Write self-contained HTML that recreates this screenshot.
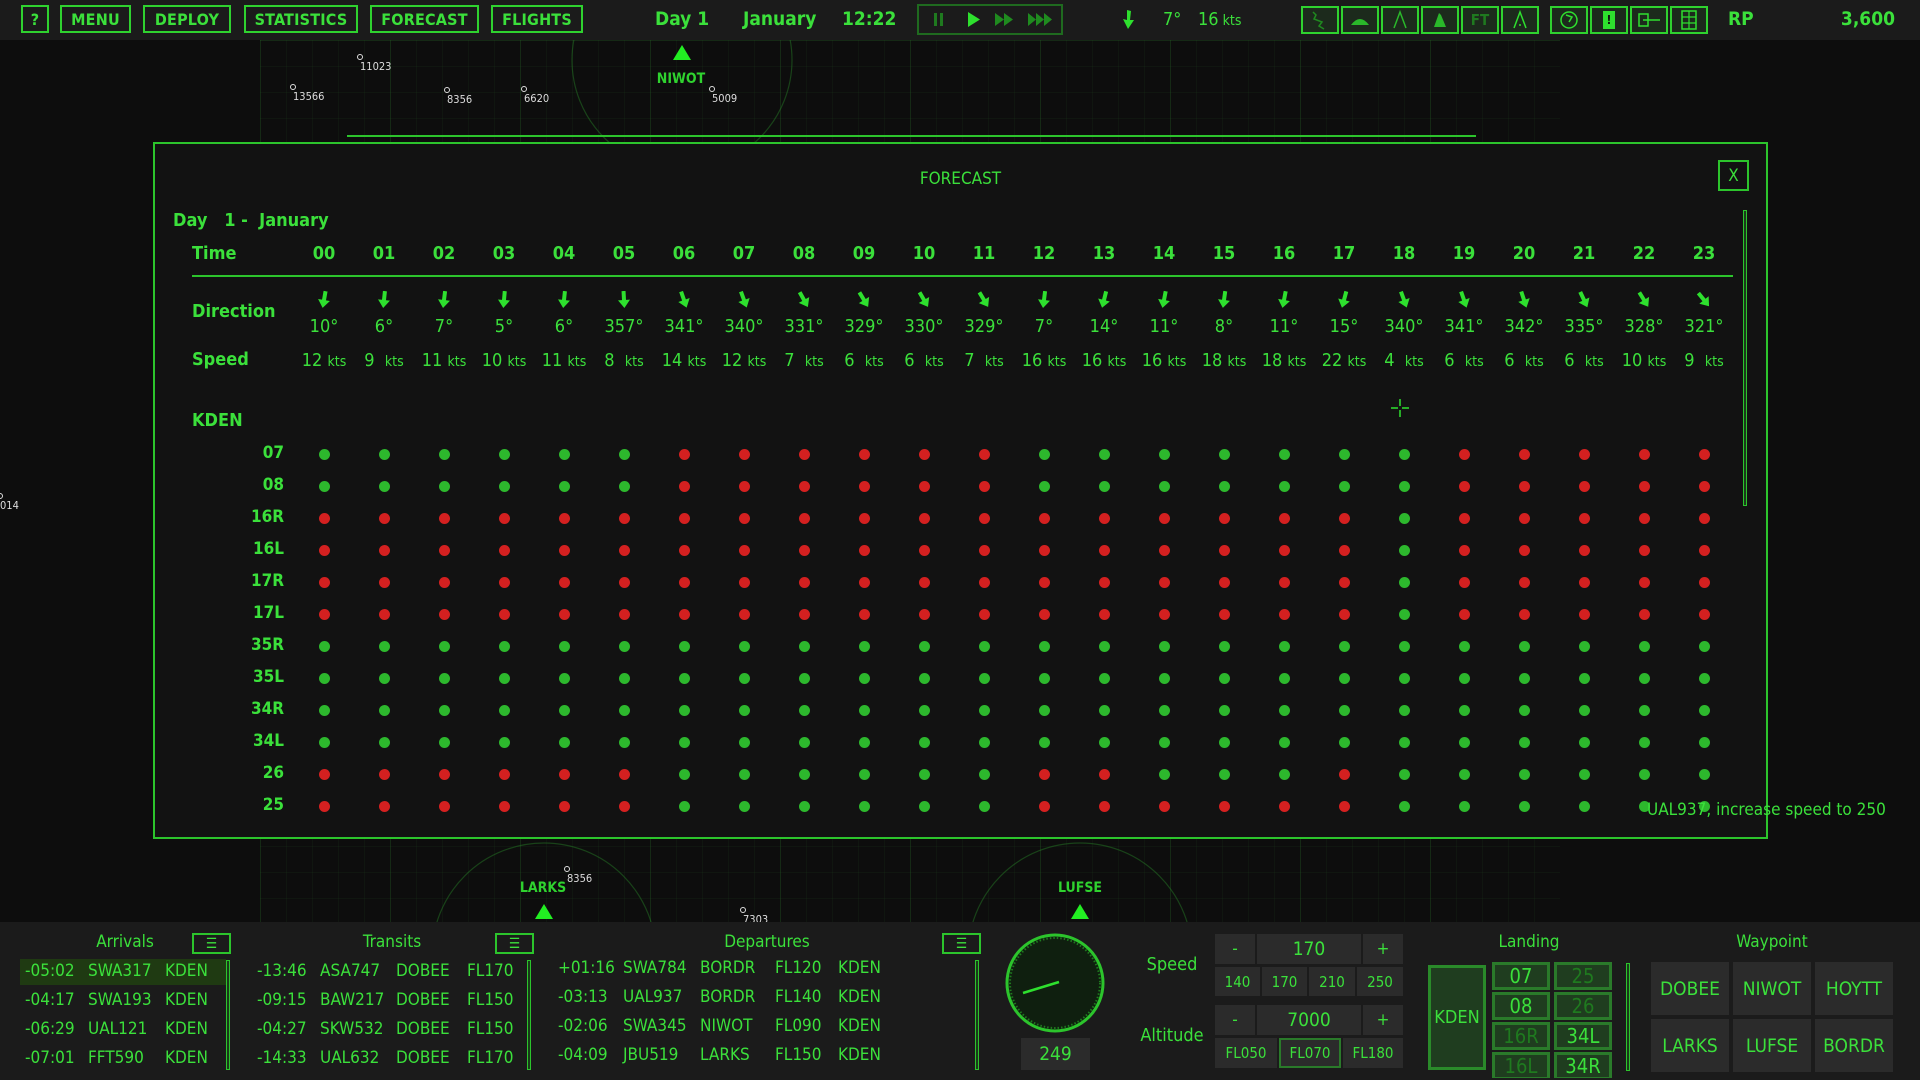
<!DOCTYPE html>
<html><head><meta charset="utf-8">
<style>
*{margin:0;padding:0;box-sizing:border-box}
body{width:1920px;height:1080px;overflow:hidden;background:#0d0d0d;font-family:"Liberation Sans Narrow","DejaVu Sans Condensed","Liberation Sans",sans-serif;color:#3be03b;position:relative}
.a{position:absolute}
.top{left:0;top:0;width:1920px;height:40px;background:#1b1b1b}
.btn{position:absolute;top:5px;height:28px;border:2px solid #2fd22f;color:#3be03b;font-weight:bold;font-size:16px;display:flex;align-items:center;justify-content:center;letter-spacing:.2px}
.tt{position:absolute;top:8px;font-size:19px;font-weight:bold}
.ib{position:absolute;top:6px;width:38px;height:28px;border:2px solid #2fd22f;background:#1c2a1c;display:flex;align-items:center;justify-content:center}
.grid{background-image:linear-gradient(rgba(40,110,40,.22) 1px,transparent 1px),linear-gradient(90deg,rgba(40,110,40,.22) 1px,transparent 1px),linear-gradient(rgba(40,110,40,.09) 1px,transparent 1px),linear-gradient(90deg,rgba(40,110,40,.09) 1px,transparent 1px);background-size:130px 130px,130px 130px,26px 26px,26px 26px}
.num{position:absolute;font-size:11px;color:#ddd;font-family:"DejaVu Sans Condensed",sans-serif}
.num:before{content:"";position:absolute;left:-3px;top:-6px;width:4px;height:4px;border:1px solid #ddd;border-radius:50%}
.wpl{position:absolute;font-size:14px;font-weight:bold;color:#2fd22f;transform:translateX(-50%)}
.tri{position:absolute;width:0;height:0;border-left:9px solid transparent;border-right:9px solid transparent;border-bottom:15px solid #22ee22;transform:translateX(-50%)}
.panel{left:153px;top:142px;width:1615px;height:697px;border:2px solid #2cc42c;background:#121212}
.row{position:absolute;left:294px;display:flex}
.row>div{width:60px;text-align:center}
.lab{position:absolute;left:37px;font-size:18px;font-weight:bold}
.rl{position:absolute;width:100px;left:29px;text-align:right;font-size:17px;font-weight:bold}
.dot{position:absolute;width:11px;height:11px;border-radius:50%}
.bot{left:0;top:922px;width:1920px;height:158px;background:#1b1b1b}
.bt{position:absolute;font-size:17px;transform:translateX(-50%)}
.mb{position:absolute;width:39px;height:21px;border:2px solid #2cc42c;display:flex;align-items:center;justify-content:center;font-size:14px;font-weight:bold}
.lr{position:absolute;font-size:17px;white-space:nowrap}
.sb{position:absolute;width:4px;border:1px solid #2cc42c;background:#1a3a1a}
.cb{position:absolute;background:#2b2b2b;display:flex;align-items:center;justify-content:center;font-size:17px}
.rw{position:absolute;width:58px;height:28px;background:#1f3d1f;border:3px solid #2a7a2a;display:flex;align-items:center;justify-content:center;font-size:20px}
.wb{position:absolute;width:78px;height:53px;background:#2b2b2b;display:flex;align-items:center;justify-content:center;font-size:19px}
</style></head><body>

<div class="a grid" style="left:260px;top:40px;width:1300px;height:882px"></div>
<svg class="a" style="left:0;top:0" width="1920" height="1080">
<g fill="none" stroke="rgba(40,130,40,.45)" stroke-width="1.2">
<circle cx="682" cy="60" r="110"/>
<circle cx="544" cy="955" r="112"/>
<circle cx="1080" cy="955" r="112"/>
</g>
<line x1="347" y1="136" x2="1476" y2="136" stroke="#2cc42c" stroke-width="2"/>
</svg>
<div class="num" style="left:360px;top:60px">11023</div>
<div class="num" style="left:293px;top:90px">13566</div>
<div class="num" style="left:447px;top:93px">8356</div>
<div class="num" style="left:524px;top:92px">6620</div>
<div class="num" style="left:712px;top:92px">5009</div>
<div class="tri" style="left:682px;top:45px"></div>
<div class="wpl" style="left:681px;top:71px">NIWOT</div>
<div class="num" style="left:0;top:499px">014</div>
<div class="num" style="left:567px;top:872px">8356</div>
<div class="num" style="left:743px;top:913px">7303</div>
<div class="wpl" style="left:543px;top:880px">LARKS</div>
<div class="tri" style="left:544px;top:904px"></div>
<div class="wpl" style="left:1080px;top:880px">LUFSE</div>
<div class="tri" style="left:1080px;top:904px"></div>

<div class="a top"></div>
<div class="btn" style="left:21px;width:28px">?</div>
<div class="btn" style="left:60px;width:71px">MENU</div>
<div class="btn" style="left:143px;width:88px">DEPLOY</div>
<div class="btn" style="left:244px;width:114px">STATISTICS</div>
<div class="btn" style="left:370px;width:109px">FORECAST</div>
<div class="btn" style="left:491px;width:92px">FLIGHTS</div>
<div class="tt" style="left:655px">Day 1</div>
<div class="tt" style="left:743px">January</div>
<div class="tt" style="left:842px">12:22</div>
<div class="a" style="left:917px;top:4px;width:146px;height:31px;border:2px solid #1f6a1f"></div>
<svg class="a" style="left:917px;top:4px" width="146" height="31">
<rect x="17" y="9" width="3" height="13" fill="#1f7a1f"/><rect x="23" y="9" width="3" height="13" fill="#1f7a1f"/>
<path d="M51 8 L63 15.5 L51 23Z" fill="#2ee02e"/>
<path d="M78 9 L87 15.5 L78 22Z M87 9 L96 15.5 L87 22Z" fill="#1f8a1f"/>
<path d="M111 9 L119 15.5 L111 22Z M119 9 L127 15.5 L119 22Z M127 9 L135 15.5 L127 22Z" fill="#1f8a1f"/>
</svg>
<svg class="a" style="left:1122px;top:10px" width="14" height="20"><path d="M5 0 L9 1 L8 10 L12 10 L6 19 L1 9 L5 10Z" fill="#2ee02e"/></svg>
<div class="a" style="left:1163px;top:9px;font-size:18px">7°</div>
<div class="a" style="left:1198px;top:9px;font-size:18px">16<span style="font-size:14px"> kts</span></div>
<div class="ib" style="left:1301px"><svg width="24" height="22"><path d="M5 3 L8 6 L6 10 L14 13 L11 17 L16 20" fill="none" stroke="#1f8a1f" stroke-width="1.5"/></svg></div>
<div class="ib" style="left:1341px"><svg width="24" height="22"><path d="M3 16 Q12 4 21 16Z" fill="#2ab82a"/></svg></div>
<div class="ib" style="left:1381px"><svg width="24" height="22"><path d="M6 19 L12 3 L18 19" fill="none" stroke="#2ab82a" stroke-width="1.5"/></svg></div>
<div class="ib" style="left:1421px"><svg width="24" height="22"><path d="M6 18 L11 4 L13 6 L18 18Z" fill="#2ab82a"/></svg></div>
<div class="ib" style="left:1461px;color:#1f7a1f;font-size:15px;font-weight:bold">FT</div>
<div class="ib" style="left:1501px"><svg width="24" height="22"><path d="M6 19 L12 3 L18 19" fill="none" stroke="#2ee02e" stroke-width="1.5"/><circle cx="12" cy="16" r="1" fill="#2ee02e"/></svg></div>
<div class="ib" style="left:1550px"><svg width="24" height="22"><circle cx="12" cy="11" r="8" fill="none" stroke="#2ee02e" stroke-width="1.5"/><path d="M9 6 L15 8 L12 13" fill="none" stroke="#2ee02e" stroke-width="1.5"/></svg></div>
<div class="ib" style="left:1590px"><div style="width:12px;height:18px;background:#2ee02e;color:#111;font-size:12px;font-weight:bold;text-align:center;line-height:18px">!</div></div>
<div class="ib" style="left:1630px"><svg width="28" height="22"><rect x="4" y="5" width="9" height="12" fill="none" stroke="#2ee02e" stroke-width="1.5"/><line x1="8" y1="11" x2="25" y2="11" stroke="#2ee02e" stroke-width="1.5"/></svg></div>
<div class="ib" style="left:1670px"><svg width="24" height="22"><rect x="5" y="2" width="14" height="18" fill="none" stroke="#2ee02e" stroke-width="1.5"/><path d="M5 8H19M5 14H19M12 2V20" stroke="#2ee02e" stroke-width="1.2"/></svg></div>
<div class="tt" style="left:1728px">RP</div>
<div class="tt" style="right:25px">3,600</div>

<div class="a panel">
<div class="a" style="left:0;width:100%;top:25px;text-align:center;font-size:17px">FORECAST</div>
<div class="a" style="left:1563px;top:16px;width:31px;height:31px;border:2px solid #2cc42c;display:flex;align-items:center;justify-content:center;font-size:17px">X</div>
<div class="a" style="left:18px;top:66px;font-size:18px;font-weight:bold">Day&nbsp;&nbsp; 1 -&nbsp; January</div>
<div class="a" style="left:1588px;top:66px;width:4px;height:296px;border:1px solid #2cc42c;background:#1a3a1a"></div>
<div class="lab" style="top:99px">Time</div>
<div class="row" style="left:139px;top:99px;font-size:18px;font-weight:bold">
<div>00</div><div>01</div><div>02</div><div>03</div><div>04</div><div>05</div><div>06</div><div>07</div><div>08</div><div>09</div><div>10</div><div>11</div><div>12</div><div>13</div><div>14</div><div>15</div><div>16</div><div>17</div><div>18</div><div>19</div><div>20</div><div>21</div><div>22</div><div>23</div></div>
<div class="a" style="left:37px;top:131px;width:1541px;height:2px;background:#2cc42c"></div>
<div class="lab" style="top:157px">Direction</div>
<div class="row" id="arr" style="left:139px;top:147px;height:20px"></div>
<div class="row" style="left:139px;top:172px;font-size:18px">
<div>10°</div><div>6°</div><div>7°</div><div>5°</div><div>6°</div><div>357°</div><div>341°</div><div>340°</div><div>331°</div><div>329°</div><div>330°</div><div>329°</div><div>7°</div><div>14°</div><div>11°</div><div>8°</div><div>11°</div><div>15°</div><div>340°</div><div>341°</div><div>342°</div><div>335°</div><div>328°</div><div>321°</div></div>
<div class="lab" style="top:205px">Speed</div>
<div class="row" style="left:139px;top:206px;font-size:18px;white-space:nowrap">
<div>12 <small style="font-size:14px">kts</small></div><div>9 &nbsp;<small style="font-size:14px">kts</small></div><div>11 <small style="font-size:14px">kts</small></div><div>10 <small style="font-size:14px">kts</small></div><div>11 <small style="font-size:14px">kts</small></div><div>8 &nbsp;<small style="font-size:14px">kts</small></div><div>14 <small style="font-size:14px">kts</small></div><div>12 <small style="font-size:14px">kts</small></div><div>7 &nbsp;<small style="font-size:14px">kts</small></div><div>6 &nbsp;<small style="font-size:14px">kts</small></div><div>6 &nbsp;<small style="font-size:14px">kts</small></div><div>7 &nbsp;<small style="font-size:14px">kts</small></div><div>16 <small style="font-size:14px">kts</small></div><div>16 <small style="font-size:14px">kts</small></div><div>16 <small style="font-size:14px">kts</small></div><div>18 <small style="font-size:14px">kts</small></div><div>18 <small style="font-size:14px">kts</small></div><div>22 <small style="font-size:14px">kts</small></div><div>4 &nbsp;<small style="font-size:14px">kts</small></div><div>6 &nbsp;<small style="font-size:14px">kts</small></div><div>6 &nbsp;<small style="font-size:14px">kts</small></div><div>6 &nbsp;<small style="font-size:14px">kts</small></div><div>10 <small style="font-size:14px">kts</small></div><div>9 &nbsp;<small style="font-size:14px">kts</small></div></div>
<div class="lab" style="top:266px">KDEN</div>
<div class="rl" style="top:299px">07</div>
<div class="rl" style="top:331px">08</div>
<div class="rl" style="top:363px">16R</div>
<div class="rl" style="top:395px">16L</div>
<div class="rl" style="top:427px">17R</div>
<div class="rl" style="top:459px">17L</div>
<div class="rl" style="top:491px">35R</div>
<div class="rl" style="top:523px">35L</div>
<div class="rl" style="top:555px">34R</div>
<div class="rl" style="top:587px">34L</div>
<div class="rl" style="top:619px">26</div>
<div class="rl" style="top:651px">25</div>
<div id="dots"></div>
<svg class="a" style="left:1234px;top:253px" width="22" height="22"><path d="M11 2V9M11 13V20M2 11H9M13 11H20" stroke="#2ee02e" stroke-width="1.5"/></svg>
</div>
<div class="a" style="left:1647px;top:800px;font-size:17px;color:#3be03b">UAL937, increase speed to 250</div>

<div class="a bot"></div>
<div class="bt" style="left:125px;top:932px">Arrivals</div>
<div class="mb" style="left:192px;top:933px">☰</div>
<div class="a" style="left:20px;top:959px;width:206px;height:26px;background:#1f3a12"></div>
<div class="sb" style="left:226px;top:960px;height:110px"></div>
<div class="lr" style="left:25px;top:961px">-05:02</div><div class="lr" style="left:88px;top:961px">SWA317</div><div class="lr" style="left:165px;top:961px">KDEN</div>
<div class="lr" style="left:25px;top:990px">-04:17</div><div class="lr" style="left:88px;top:990px">SWA193</div><div class="lr" style="left:165px;top:990px">KDEN</div>
<div class="lr" style="left:25px;top:1019px">-06:29</div><div class="lr" style="left:88px;top:1019px">UAL121</div><div class="lr" style="left:165px;top:1019px">KDEN</div>
<div class="lr" style="left:25px;top:1048px">-07:01</div><div class="lr" style="left:88px;top:1048px">FFT590</div><div class="lr" style="left:165px;top:1048px">KDEN</div>

<div class="bt" style="left:392px;top:932px">Transits</div>
<div class="mb" style="left:495px;top:933px">☰</div>
<div class="sb" style="left:527px;top:960px;height:110px"></div>
<div class="lr" style="left:257px;top:961px">-13:46</div><div class="lr" style="left:320px;top:961px">ASA747</div><div class="lr" style="left:396px;top:961px">DOBEE</div><div class="lr" style="left:467px;top:961px">FL170</div>
<div class="lr" style="left:257px;top:990px">-09:15</div><div class="lr" style="left:320px;top:990px">BAW217</div><div class="lr" style="left:396px;top:990px">DOBEE</div><div class="lr" style="left:467px;top:990px">FL150</div>
<div class="lr" style="left:257px;top:1019px">-04:27</div><div class="lr" style="left:320px;top:1019px">SKW532</div><div class="lr" style="left:396px;top:1019px">DOBEE</div><div class="lr" style="left:467px;top:1019px">FL150</div>
<div class="lr" style="left:257px;top:1048px">-14:33</div><div class="lr" style="left:320px;top:1048px">UAL632</div><div class="lr" style="left:396px;top:1048px">DOBEE</div><div class="lr" style="left:467px;top:1048px">FL170</div>

<div class="bt" style="left:767px;top:932px">Departures</div>
<div class="mb" style="left:942px;top:933px">☰</div>
<div class="sb" style="left:975px;top:960px;height:110px"></div>
<div class="lr" style="left:558px;top:958px">+01:16</div><div class="lr" style="left:623px;top:958px">SWA784</div><div class="lr" style="left:700px;top:958px">BORDR</div><div class="lr" style="left:775px;top:958px">FL120</div><div class="lr" style="left:838px;top:958px">KDEN</div>
<div class="lr" style="left:558px;top:987px">-03:13</div><div class="lr" style="left:623px;top:987px">UAL937</div><div class="lr" style="left:700px;top:987px">BORDR</div><div class="lr" style="left:775px;top:987px">FL140</div><div class="lr" style="left:838px;top:987px">KDEN</div>
<div class="lr" style="left:558px;top:1016px">-02:06</div><div class="lr" style="left:623px;top:1016px">SWA345</div><div class="lr" style="left:700px;top:1016px">NIWOT</div><div class="lr" style="left:775px;top:1016px">FL090</div><div class="lr" style="left:838px;top:1016px">KDEN</div>
<div class="lr" style="left:558px;top:1045px">-04:09</div><div class="lr" style="left:623px;top:1045px">JBU519</div><div class="lr" style="left:700px;top:1045px">LARKS</div><div class="lr" style="left:775px;top:1045px">FL150</div><div class="lr" style="left:838px;top:1045px">KDEN</div>

<svg class="a" style="left:1003px;top:931px" width="104" height="104">
<circle cx="52" cy="52" r="48" fill="#0f1f0f" stroke="#2cc42c" stroke-width="3"/>
<circle cx="52" cy="52" r="45" fill="none" stroke="#1f7a1f" stroke-width="2" stroke-dasharray="1.5 2"/>
<line x1="20" y1="62" x2="56" y2="51" stroke="#2ee02e" stroke-width="2.5"/>
</svg>
<div class="cb" style="left:1021px;top:1038px;width:69px;height:32px;font-size:19px">249</div>

<div class="bt" style="left:1172px;top:954px;font-size:18px">Speed</div>
<div class="cb" style="left:1215px;top:934px;width:40px;height:30px">-</div>
<div class="cb" style="left:1257px;top:934px;width:104px;height:30px;font-size:19px">170</div>
<div class="cb" style="left:1363px;top:934px;width:40px;height:30px">+</div>
<div class="cb" style="left:1215px;top:967px;width:45px;height:29px;font-size:15px">140</div>
<div class="cb" style="left:1262px;top:967px;width:45px;height:29px;font-size:15px">170</div>
<div class="cb" style="left:1309px;top:967px;width:46px;height:29px;font-size:15px">210</div>
<div class="cb" style="left:1357px;top:967px;width:46px;height:29px;font-size:15px">250</div>
<div class="bt" style="left:1172px;top:1025px;font-size:18px">Altitude</div>
<div class="cb" style="left:1215px;top:1005px;width:40px;height:30px">-</div>
<div class="cb" style="left:1257px;top:1005px;width:104px;height:30px;font-size:19px">7000</div>
<div class="cb" style="left:1363px;top:1005px;width:40px;height:30px">+</div>
<div class="cb" style="left:1215px;top:1038px;width:62px;height:30px;font-size:15px">FL050</div>
<div class="cb" style="left:1279px;top:1038px;width:62px;height:30px;font-size:15px;border:2px solid #2a7a2a">FL070</div>
<div class="cb" style="left:1343px;top:1038px;width:60px;height:30px;font-size:15px">FL180</div>

<div class="bt" style="left:1529px;top:932px">Landing</div>
<div class="a" style="left:1428px;top:965px;width:58px;height:105px;background:#1f3d1f;border:3px solid #2a8a2a;display:flex;align-items:center;justify-content:center;font-size:18px">KDEN</div>
<div class="a" style="left:1492px;top:962px;width:124px;height:116px;overflow:hidden">
<div class="rw" style="left:0;top:0">07</div><div class="rw" style="left:62px;top:0;color:#1f7a1f">25</div>
<div class="rw" style="left:0;top:30px">08</div><div class="rw" style="left:62px;top:30px;color:#1f7a1f">26</div>
<div class="rw" style="left:0;top:60px;color:#1f7a1f">16R</div><div class="rw" style="left:62px;top:60px">34L</div>
<div class="rw" style="left:0;top:90px;color:#1f7a1f">16L</div><div class="rw" style="left:62px;top:90px">34R</div>
</div>
<div class="sb" style="left:1626px;top:963px;height:108px"></div>

<div class="bt" style="left:1772px;top:932px">Waypoint</div>
<div class="wb" style="left:1651px;top:962px">DOBEE</div>
<div class="wb" style="left:1733px;top:962px">NIWOT</div>
<div class="wb" style="left:1815px;top:962px">HOYTT</div>
<div class="wb" style="left:1651px;top:1019px">LARKS</div>
<div class="wb" style="left:1733px;top:1019px">LUFSE</div>
<div class="wb" style="left:1815px;top:1019px">BORDR</div>

<script>
var dirs=[10,6,7,5,6,357,341,340,331,329,330,329,7,14,11,8,11,15,340,341,342,335,328,321];
var a=document.getElementById('arr'),h='';
dirs.forEach(function(d){h+='<div><svg width="14" height="18" style="transform:rotate('+d+'deg)"><path d="M5 0H9V9H13L7 17L1 9H5Z" fill="#2ee02e"/></svg></div>';});
a.innerHTML=h;
var pats=[
"GGGGGGRRRRRRGGGGGGGRRRRR","GGGGGGRRRRRRGGGGGGGRRRRR",
"RRRRRRRRRRRRRRRRRRGRRRRR","RRRRRRRRRRRRRRRRRRGRRRRR","RRRRRRRRRRRRRRRRRRGRRRRR","RRRRRRRRRRRRRRRRRRGRRRRR",
"GGGGGGGGGGGGGGGGGGGGGGGG","GGGGGGGGGGGGGGGGGGGGGGGG","GGGGGGGGGGGGGGGGGGGGGGGG","GGGGGGGGGGGGGGGGGGGGGGGG",
"RRRRRRGGGGGGRRGGGRGGGGGG","RRRRRRGGGGGGRRRRRRGGGGGG"];
var o='';
pats.forEach(function(p,r){for(var i=0;i<24;i++){o+='<div class="dot" style="left:'+(164+60*i)+'px;top:'+(305+32*r)+'px;background:'+(p[i]=='G'?'#2db82d':'#d42020')+'"></div>';}});
document.getElementById('dots').innerHTML=o;
</script>
</body></html>
